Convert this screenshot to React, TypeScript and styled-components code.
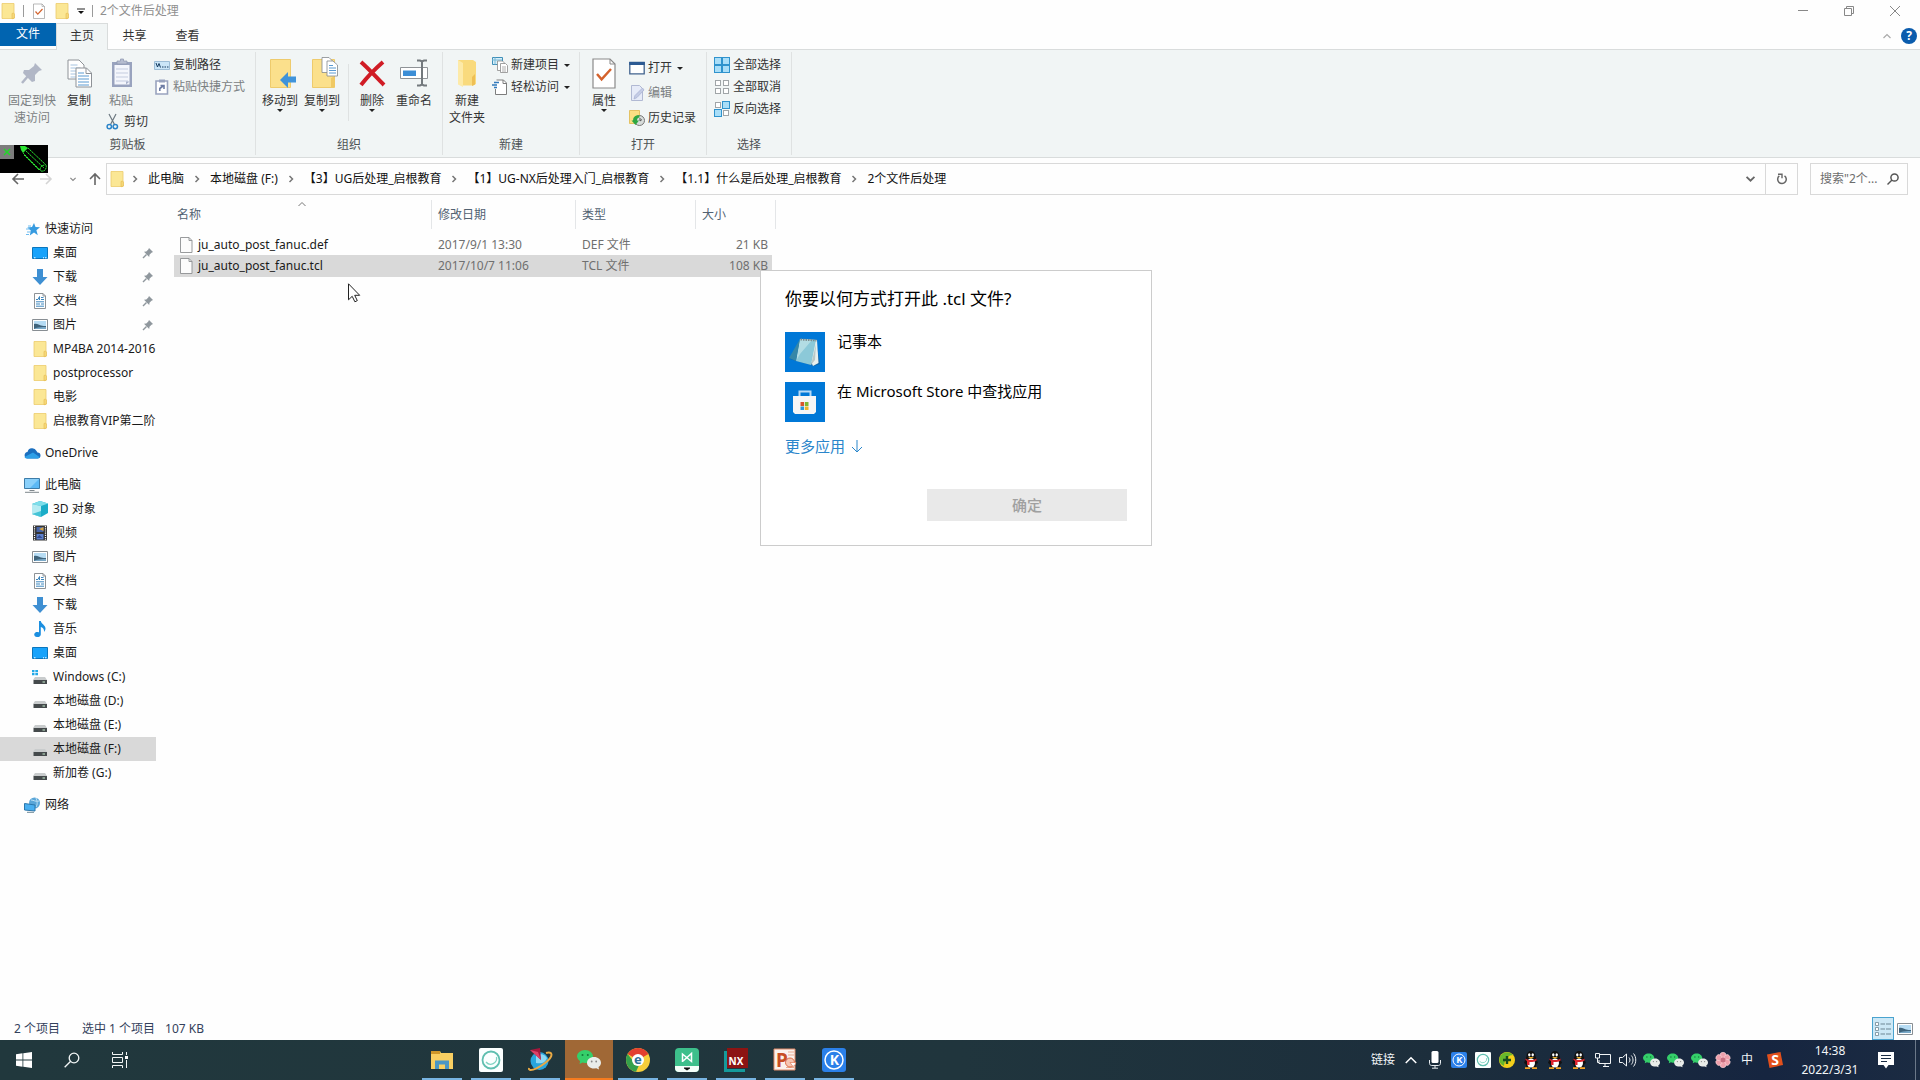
import React from "react";
import styled, { createGlobalStyle, css } from "styled-components";

const GlobalStyle = createGlobalStyle`
  * { box-sizing: border-box; }
  html, body { margin: 0; padding: 0; }
  body {
    font-family: "Noto Sans", "Noto Sans CJK SC", sans-serif;
    font-size: 12px;
    line-height: 16px;
    color: #1a1a1a;
    background: #ffffff;
    overflow: hidden;
  }
  button, input { font: inherit; color: inherit; }
  button { border: 0; padding: 0; margin: 0; background: none; cursor: default; }
  svg { display: block; flex: none; overflow: visible; }
  ul { list-style: none; margin: 0; padding: 0; }
`;

/* ---------- Icons ---------- */

type IconProps = { s?: number };

const SvgText = styled.text`
  font-family: "Noto Sans", sans-serif;
  font-weight: 700;
`;

const Folder = ({ s = 16 }: IconProps) => (
  <svg width={s} height={s} viewBox="0 0 16 16">
    <path d="M2 .5h12v15H2z" fill="#fbe795" stroke="#eccb6c" strokeWidth=".8" />
    <path d="M12 10.500l1.500-.5 1 1v4l-2.500.8z" fill="#f5d877" stroke="#e6bb50" strokeWidth=".6" />
  </svg>
);
const BigFolder = () => (
  <svg width="32" height="32" viewBox="0 0 32 32">
    <path d="M7 3h15l3 2v22l-3 1.500H11z" fill="#f9da7d" />
    <path d="M7 3l5 3v24l-5-2.500z" fill="#fdeaa8" />
    <path d="M24 17l-3 3v9l3-1.500z" fill="#eebf55" />
  </svg>
);
const PageCheck = ({ s = 16 }: IconProps) => (
  <svg width={s} height={s} viewBox="0 0 16 16">
    <path d="M2.500 1h8.500l2.500 2.500v12h-11z" fill="#fff" stroke="#8a8a8a" strokeWidth=".6" />
    <path d="M11 1v2.500h2.500" fill="none" stroke="#8a8a8a" strokeWidth=".5" />
    <path d="M4.500 8.500l2.300 2.700L11.500 6" fill="none" stroke="#d4622c" strokeWidth="1.200" />
  </svg>
);
const Caret = () => (
  <svg width="6" height="3" viewBox="0 0 6 3"><path d="M0 0h6L3 3z" fill="#222" /></svg>
);
const QuickCaret = () => (
  <svg width="8" height="7" viewBox="0 0 8 7"><path d="M0 1h8" stroke="#222" /><path d="M1 3h6L4 6z" fill="#111" /></svg>
);
const Chevron = ({ dir, color = "#777", s = 8, w = 1.5 }: { dir: "up" | "down" | "right"; color?: string; s?: number; w?: number }) => (
  <svg width={s} height={s} viewBox="0 0 8 8">
    <path
      d={dir === "right" ? "M2.500 1l3 3-3 3" : dir === "up" ? "M.5 6L4 2.500 7.500 6" : "M.5 2.500L4 6l3.500-3.500"}
      fill="none" stroke={color} strokeWidth={w}
    />
  </svg>
);
const Pin = () => (
  <svg width="32" height="32" viewBox="0 0 32 32">
    <path d="M19 6l7 7-3 1-4 4 0 6-3 1-9-9 1-3h5l5-4z" fill="#b1b7c6" />
    <path d="M12 19l-6 7" stroke="#b1b7c6" strokeWidth="2.500" />
  </svg>
);
const SmallPin = () => (
  <svg width="12" height="12" viewBox="0 0 12 12">
    <path d="M7 1l4 4-1.500.7-2 2L7.200 10 2 4.800l2.300-.3 2-2z" fill="#8f979d" />
    <path d="M4.500 7.500L1 11" stroke="#8f979d" strokeWidth="1.400" />
  </svg>
);
const CopyPages = () => (
  <svg width="32" height="32" viewBox="0 0 32 32">
    <path d="M5 3h11l5 5v14H5z" fill="#fff" stroke="#8e9297" />
    <path d="M7.500 8h7M7.500 11h10M7.500 14h6M7.500 17h6M7.500 20h6" stroke="#a6c3e0" />
    <path d="M13 11h10.500l5 5v14H13z" fill="#fff" stroke="#8e9297" />
    <path d="M23 11v5.500h5" fill="none" stroke="#8e9297" />
    <path d="M15 16h6M15 19h11M15 22h11M15 25h11M15 28h11" stroke="#5b9bd2" />
  </svg>
);
const Clipboard = () => (
  <svg width="32" height="32" viewBox="0 0 32 32">
    <path d="M7 5h20v25H7z" fill="#99a3be" />
    <path d="M9.500 8h15v19.500h-15z" fill="#f4f6fc" />
    <path d="M12 6V4h3.500V2h3v2H22v3H12z" fill="#b6bdd0" stroke="#8e97b0" strokeWidth=".7" />
    <path d="M11 12h12M11 16h12M11 20h12M11 24h12" stroke="#c4ccdf" />
    <path d="M21 27.500v-3h3.500z" fill="#aab3cb" />
  </svg>
);
const Scissors = () => (
  <svg width="16" height="16" viewBox="0 0 16 16">
    <path d="M4 0l5.500 10.500M11 0L5.500 10.500" stroke="#6d7880" strokeWidth="1.200" fill="none" />
    <circle cx="4.300" cy="12.600" r="2.200" fill="none" stroke="#2a83c8" strokeWidth="1.500" />
    <circle cx="10.300" cy="12.600" r="2.200" fill="none" stroke="#2a83c8" strokeWidth="1.500" />
  </svg>
);
const PathIcon = () => (
  <svg width="16" height="16" viewBox="0 0 16 16">
    <path d="M.5 4.500h15v8H.5z" fill="#cbe6f8" stroke="#9dbdd6" />
    <path d="M2 6l1.500 4L5 6.500 6.500 10.500" fill="none" stroke="#12395e" />
    <path d="M8 10h1.500M10.500 10H12M13 10h1.500" stroke="#12395e" />
  </svg>
);
const PasteShortcut = () => (
  <svg width="16" height="16" viewBox="0 0 16 16">
    <path d="M2 2h11.500v13H2z" fill="#fff" stroke="#99a3be" strokeWidth="1.600" />
    <path d="M5 .5h6v3H5z" fill="#99a3be" />
    <path d="M5.800 12V9.500L9 7M6.500 6.500H10V10" fill="none" stroke="#6d7ca4" strokeWidth="1.600" />
  </svg>
);
const MoveTo = () => (
  <svg width="32" height="32" viewBox="0 0 32 32">
    <path d="M6.500 2.500h20v28h-20z" fill="#fbe08c" stroke="#eecb6d" />
    <path d="M16 23l8-8v4.500h8v6h-8v5.500z" fill="#3f93da" />
  </svg>
);
const CopyTo = () => (
  <svg width="32" height="32" viewBox="0 0 32 32">
    <path d="M6.500 2.500h22v28h-22z" fill="#fbe08c" stroke="#eecb6d" />
    <path d="M25 21l4-2v11h-4z" fill="#f0c964" />
    <path d="M16 .5h7l4 4v11H16z" fill="#fff" stroke="#84898e" strokeWidth=".8" />
    <path d="M21 4h6l4.500 4v11H21z" fill="#fff" stroke="#84898e" strokeWidth=".8" />
    <path d="M23 8.500h4M23 11h7M23 13.500h7M23 16h7" stroke="#5b9bd2" />
  </svg>
);
const DeleteX = () => (
  <svg width="32" height="32" viewBox="0 0 32 32">
    <path d="M5 5c8 7 15 15 23 23M27 5C19 12 12 19 5 28" stroke="#d01c25" strokeWidth="4" fill="none" />
  </svg>
);
const Rename = () => (
  <svg width="32" height="32" viewBox="0 0 32 32">
    <path d="M2.500 10.500h27v11h-27z" fill="#fff" stroke="#8f9397" />
    <path d="M5 13.500h13v5.500H5z" fill="#3c8ed6" />
    <path d="M19 3.500h3l2 1 2-1h3M24 4v24M19 28.500h3l2-1 2 1h3" fill="none" stroke="#73797d" strokeWidth="2" />
  </svg>
);
const NewItem = () => (
  <svg width="16" height="16" viewBox="0 0 16 16">
    <path d="M.5.500h10v7H.5z" fill="#d7effa" stroke="#3f8fb8" />
    <path d="M3 .5v7M0 3h10" stroke="#78b9d6" />
    <path d="M5.500 4h5l2 2v7.500h-7z" fill="#fff" stroke="#8a8a8a" strokeWidth=".8" />
    <path d="M8.500 6.500h5l2 2v7h-7z" fill="#fff" stroke="#8a8a8a" strokeWidth=".8" />
    <path d="M10 10h4M10 12h4M10 14h4" stroke="#999" strokeWidth=".8" />
  </svg>
);
const EasyAccess = () => (
  <svg width="16" height="16" viewBox="0 0 16 16">
    <path d="M4.500 1h7l3 3v11.500h-11V10" fill="#fff" stroke="#7d7d7d" />
    <path d="M11 1v3.500h3.500" fill="none" stroke="#7d7d7d" />
    <path d="M2 3.500h5M0 6h5M2 8.500h3" stroke="#3279bb" strokeWidth="1.300" />
  </svg>
);
const OpenIcon = () => (
  <svg width="16" height="16" viewBox="0 0 16 16">
    <path d="M.8 2.500h14.400v11.300H.8z" fill="#fff" stroke="#41638e" strokeWidth="1.300" />
    <path d="M.2 2h15.600v3H.2z" fill="#2c5a93" />
  </svg>
);
const EditIcon = () => (
  <svg width="16" height="16" viewBox="0 0 16 16">
    <path d="M2.500.5h8l3 3v12h-11z" fill="#e6ebf8" stroke="#b1b9d3" />
    <path d="M5 14l1-3.500L13.500 3l1.500 2-7 7.500z" fill="#c4cce5" stroke="#a9b3d3" strokeWidth=".8" />
  </svg>
);
const History = () => (
  <svg width="16" height="16" viewBox="0 0 16 16">
    <path d="M.5.500h10v13H.5z" fill="#fbdf83" stroke="#e0b74d" strokeWidth=".8" />
    <circle cx="10.500" cy="10.500" r="5" fill="#d7dcda" stroke="#777" />
    <path d="M10.500 5.500a5 5 0 0 0-6.500 5H2.500l4 4.500 3.500-4.500H8c0-2 1-3 2.500-3z" fill="#2fa742" />
    <path d="M11 8v3l2-1.500" stroke="#555" fill="none" />
  </svg>
);
const Tiles = ({ on }: { on: boolean[] }) => (
  <svg width="16" height="16" viewBox="0 0 16 16">
    {on.map((f, i) => {
      const x = (i % 2) * 8;
      const y = Math.floor(i / 2) * 8;
      return f
        ? <rect key={i} x={x + 0.5} y={y + 0.5} width="7" height="7" fill="#a9def8" stroke="#2f93cd" />
        : <rect key={i} x={x + 1.5} y={y + 1.5} width="5" height="5" fill="#fff" stroke="#a0a5a8" />;
    })}
  </svg>
);
const ArrowIcon = ({ d, color }: { d: string; color: string }) => (
  <svg width="12" height="12" viewBox="0 0 12 12"><path d={d} fill="none" stroke={color} strokeWidth="1.600" /></svg>
);
const Refresh = () => (
  <svg width="12" height="12" viewBox="0 0 12 12">
    <path d="M8.500 2.800A4.300 4.300 0 1 1 3.300 2.900" fill="none" stroke="#666" strokeWidth="1.500" />
    <path d="M2 1.200h4v4" fill="none" stroke="#666" strokeWidth="1.400" />
  </svg>
);
const Magnifier = ({ color, w = 1.5, s = 12 }: { color: string; w?: number; s?: number }) => (
  <svg width={s} height={s} viewBox="0 0 12 12">
    <circle cx="7.500" cy="4.500" r="3.600" fill="none" stroke={color} strokeWidth={w} />
    <path d="M5 7L.5 11.500" stroke={color} strokeWidth={w} />
  </svg>
);
const FilePage = () => (
  <svg width="16" height="16" viewBox="0 0 16 16">
    <path d="M2.500.5h8.500l3 3v12H2.500z" fill="#fcfcfc" stroke="#8d9092" strokeWidth=".9" />
    <path d="M11 .5v3h3" fill="none" stroke="#8d9092" strokeWidth=".9" />
  </svg>
);
const Star = () => (
  <svg width="16" height="16" viewBox="0 0 16 16">
    <path d="M10 2l1.500 4 4.500.2-3.600 3 1.400 5L10 11.500l-4.200 3 1-5L3.300 6.500l4.700-.5z" fill="#369be0" />
    <path d="M4 5h3M2 8h4M3 11h4M2 13.500h3" stroke="#6fbcf0" strokeWidth="1" />
  </svg>
);
const Desktop = () => (
  <svg width="16" height="16" viewBox="0 0 16 16">
    <path d="M.5 2.500h15v11H.5z" fill="#18a3fb" stroke="#0b76bd" />
    <path d="M2 12.800h1.500M11 12.800h1M13 12.800h1.500" stroke="#fff" />
  </svg>
);
const Download = () => (
  <svg width="16" height="16" viewBox="0 0 16 16">
    <path d="M5 0h6v8h4.500L8 16 .5 8H5z" fill="#3e8fd2" />
  </svg>
);
const DocIcon = () => (
  <svg width="16" height="16" viewBox="0 0 16 16">
    <path d="M2.500.5h8.500l2.500 2.500v12.500h-11z" fill="#fff" stroke="#80868a" strokeWidth=".9" />
    <path d="M11 .5V3h2.500" fill="none" stroke="#80868a" strokeWidth=".8" />
    <path d="M4 6.500h2L7.500 3.500V7M9 4.500h2.500M9 6.500h3M4 8.800h8M4 11h4M4 13.200h8M9 11h3" stroke="#3d87be" fill="none" />
  </svg>
);
const PictureIcon = () => (
  <svg width="16" height="16" viewBox="0 0 16 16">
    <path d="M.5 2.500h15v11H.5z" fill="#fff" stroke="#888e93" />
    <path d="M2 4h12v8H2z" fill="#b6dcf4" />
    <path d="M2 7c3-1 5 1 7 1.500 2 .5 3 .5 5 .5v3H2z" fill="#3f647c" />
    <path d="M4 11c3-1 6-1 10-1v2H2z" fill="#7aa9c8" />
  </svg>
);
const OneDrive = () => (
  <svg width="16" height="16" viewBox="0 0 16 16">
    <path d="M3.500 7a4.800 4.800 0 0 1 9-1l1 1.500a3 3 0 0 1 0 6H3.200A3.300 3.300 0 0 1 3.500 7z" fill="#1b6fbf" />
    <path d="M.5 12L9 7.500l6.500 4.500c-.5 1-1.500 1.500-2.500 1.500H3.500c-1.500 0-2.500-.5-3-1.500z" fill="#2ea0e8" />
  </svg>
);
const Pc = () => (
  <svg width="16" height="16" viewBox="0 0 16 16">
    <path d="M.5 1.500h15v10H.5z" fill="#5cb9f5" stroke="#3d7ca8" />
    <path d="M1 2h14L6 11H1z" fill="#8ad0fa" />
    <path d="M5.500 13.500h5M1 15.300h14" stroke="#7f878c" />
  </svg>
);
const Cube = () => (
  <svg width="16" height="16" viewBox="0 0 16 16">
    <path d="M0 3l8-3 8 2.500V12l-7 4-9-3z" fill="#1badc8" />
    <path d="M0 3l8-3 8 2.500L9 5z" fill="#7ddeea" />
    <path d="M0 3l9 2v11l-9-3z" fill="#b5ebf2" />
    <path d="M9 10l-9 3 9 3z" fill="#44c3d6" />
  </svg>
);
const Video = () => (
  <svg width="16" height="16" viewBox="0 0 16 16">
    <path d="M1 .5h14v15H1z" fill="#333" />
    <path d="M2.500 1v14M13.500 1v14" stroke="#fff" strokeWidth="1.200" strokeDasharray="1.200 1" />
    <path d="M4.500 2h7v5h-7z" fill="#4664a8" /><path d="M7 4l4.500-2v4z" fill="#d4a443" />
    <path d="M4.500 9h7v5.500h-7z" fill="#5d80cc" /><path d="M4.500 13l3-3 3 3z" fill="#344d91" />
  </svg>
);
const Music = () => (
  <svg width="16" height="16" viewBox="0 0 16 16">
    <path d="M7 0h1.800c.4 3 4.700 4 4.700 7.500 0 1.500-.8 2.500-1.500 3.500.5-3-1.500-4.500-3.200-5v7.500a3.300 2.600 0 1 1-1.800-2.300z" fill="#1b8fe0" />
  </svg>
);
const Drive = ({ win }: { win?: boolean }) => (
  <svg width="16" height="16" viewBox="0 0 16 16">
    {win && <path d="M0 1h2.500v2.300H0zM3.300 1H6v2.300H3.300zM0 4h2.500v2.300H0zM3.300 4H6v2.300H3.300z" fill="#22a9e8" />}
    <path d="M3 8h10l2 3H1z" fill="#c9cccd" />
    <path d="M1.500 11h13.500v4H1.500z" fill="#454a4c" />
    <path d="M10.500 13h2.500" stroke="#c9f0d0" />
  </svg>
);
const Network = () => (
  <svg width="16" height="16" viewBox="0 0 16 16">
    <circle cx="10.500" cy="6" r="5.500" fill="#5aa6d8" />
    <path d="M7 3c3 0 4 2 8 1M12 1c1 3 2 6 0 9" stroke="#c0e2f5" fill="none" />
    <path d="M.5 6.500l10.500 1.500v6l-10.500-1z" fill="#49aff0" stroke="#2c77ac" />
    <path d="M3 15.300h7" stroke="#6c8797" />
  </svg>
);
const Notepad = () => (
  <svg width="40" height="40" viewBox="0 0 40 40">
    <path d="M16 8l15 1 4 23-6 2-24-7z" fill="#1b4d72" opacity=".5" />
    <path d="M15 7l17 1 1.500 23-5.500 3z" fill="#e7f0ee" />
    <path d="M15 7l16 1-5 25-15-4z" fill="#8cc9d8" />
    <path d="M15 7l12 1-12 14-4 7z" fill="#b3dde4" />
    <path d="M15 7L4 26l7 3z" fill="#3587a8" />
    <path d="M15.500 7.500l16 1" stroke="#7e8b8c" strokeWidth="2" strokeDasharray="1.500 1" />
    <path d="M31 12l-5 21 4-5z" fill="#b7c9c8" />
  </svg>
);
const Store = () => (
  <svg width="40" height="40" viewBox="0 0 40 40">
    <path d="M14.500 15V9.500h11V15" fill="none" stroke="#b7daf6" strokeWidth="2" />
    <path d="M8 14h23v16l-2 2H10l-2-2z" fill="#f6f6f6" />
    <path d="M15.500 20h3.500v4h-3.500z" fill="#d8542e" /><path d="M19.800 20h3.700v4h-3.700z" fill="#7eb833" />
    <path d="M15.500 24.500h3.500v3.500h-3.500z" fill="#2b96dc" /><path d="M19.800 24.500h3.700v3.500h-3.700z" fill="#edb52c" />
  </svg>
);
const WinLogo = () => (
  <svg width="16" height="16" viewBox="0 0 16 16">
    <path d="M0 2.300l6.500-1v6.200H0zM7.300 1.200L16 0v7.500H7.300zM0 8.400h6.500v6.300L0 13.800zM7.300 8.400H16V16l-8.700-1.200z" fill="#fff" />
  </svg>
);
const TaskView = () => (
  <svg width="16" height="16" viewBox="0 0 16 16">
    <path d="M.5 0v2.500h10V0M.5 16v-2.500h10V16M.5 5.500h10v5H.5zM14.500 0v3M14.500 8v8" fill="none" stroke="#f2f6f6" />
    <path d="M13 4h3v3h-3z" fill="#fff" />
  </svg>
);
const ExplorerApp = () => (
  <svg width="24" height="24" viewBox="0 0 24 24">
    <path d="M1 3h9l1 2h12v16H1z" fill="#f9cf62" /><path d="M1 3h9v3H1z" fill="#cf972a" />
    <path d="M5 12.500h14V21h-4v-4.500H9V21H5z" fill="#4b97c5" />
  </svg>
);
const RingApp = ({ s = 24 }: IconProps) => (
  <svg width={s} height={s} viewBox="0 0 24 24">
    <rect width="24" height="24" rx="2" fill="#fbffff" />
    <circle cx="12" cy="12" r="8.500" fill="none" stroke="#5fbfb0" strokeWidth="1.800" />
    <path d="M7 14a6 6 0 0 0 10.500-5" fill="none" stroke="#7fd3c2" strokeWidth="1.300" />
  </svg>
);
const UgApp = () => (
  <svg width="24" height="24" viewBox="0 0 24 24">
    <circle cx="11.500" cy="13" r="9" fill="#28a5dd" /><path d="M8 8a7 7 0 0 1 11 2c-2 5-6 6-11 5z" fill="#8ed8f4" />
    <path d="M2 2l10-2 1 12z" fill="#a6173c" /><path d="M2 2l8 2 3 8z" fill="#dc4168" />
    <path d="M18 5c7-2 8 3-1 10C8 22 0 24 1 20" fill="none" stroke="#e8a945" strokeWidth="2" />
  </svg>
);
const WeChat = ({ s = 24 }: IconProps) => (
  <svg width={s} height={s} viewBox="0 0 24 24">
    <path d="M8 2c4.500 0 8 3 8 6.700S12.500 15 8 15l-2.500-.5L2.500 16l.6-2.800A6.500 6.500 0 0 1 0 8.700C0 5 3.500 2 8 2z" fill="#35cf6a" />
    <path d="M17 9c4 0 7 2.600 7 5.800 0 1.800-1 3.300-2.500 4.300l.5 2.400-2.600-1.200-2.400.3c-4 0-7-2.600-7-5.800S13 9 17 9z" fill="#e9ece9" />
    <circle cx="5.500" cy="7" r="1" fill="#14793a" /><circle cx="10.800" cy="7" r="1" fill="#14793a" />
    <circle cx="14.700" cy="13.500" r=".9" fill="#888" /><circle cx="19.200" cy="13.500" r=".9" fill="#888" />
  </svg>
);
const ChromeApp = () => (
  <svg width="24" height="24" viewBox="0 0 24 24">
    <circle cx="12" cy="12" r="12" fill="#f6cf3c" />
    <path d="M12 12L1.600 6A12 12 0 0 1 22.400 6z" fill="#e3402f" />
    <path d="M1.600 6A12 12 0 0 0 10 23.800L14 15 8 14z" fill="#35a04b" />
    <circle cx="12" cy="12" r="6" fill="#fff" />
    <SvgText x="12" y="16" fontSize="13" textAnchor="middle" fill="#2c6f98">e</SvgText>
  </svg>
);
const MindApp = () => (
  <svg width="24" height="24" viewBox="0 0 24 24">
    <rect width="24" height="24" rx="4" fill="#3dbf8b" />
    <path d="M0 18h24v2a4 4 0 0 1-4 4H4a4 4 0 0 1-4-4z" fill="#f4fffa" />
    <path d="M7.500 14V6l9 7.500V5.500l-9 8" fill="none" stroke="#fff" strokeWidth="1.500" />
    <path d="M9 19.500h6v1l-3 2-3-2z" fill="#111" />
  </svg>
);
const NxApp = () => (
  <svg width="24" height="24" viewBox="0 0 24 24">
    <path d="M0 3h3v18h18v3H0z" fill="#159a9b" /><path d="M3 0h21v20H3z" fill="#8c1413" />
    <SvgText x="12" y="17" fontSize="10" textAnchor="middle" fill="#fff">NX</SvgText>
  </svg>
);
const PptApp = () => (
  <svg width="24" height="24" viewBox="0 0 24 24">
    <path d="M1 1h21v21H1z" fill="#fbf1ec" stroke="#e08a68" />
    <path d="M15 4h6M15 7h6M13 19.500h8" stroke="#e9ab92" />
    <circle cx="17" cy="14.500" r="4.500" fill="#f6c5b2" stroke="#df6b43" /><path d="M17 14.500h6a5 5 0 0 1-3 4z" fill="#fff" stroke="#df6b43" strokeWidth=".6" />
    <SvgText x="3" y="19" fontSize="19" fill="#c84d24">P</SvgText>
  </svg>
);
const KApp = ({ s = 24 }: IconProps) => (
  <svg width={s} height={s} viewBox="0 0 24 24">
    <rect width="24" height="24" rx="3" fill="#2b80e9" />
    <circle cx="12" cy="12" r="9" fill="none" stroke="#fff" strokeWidth="1.500" />
    <SvgText x="12.500" y="17" fontSize="14" textAnchor="middle" fill="#fff">K</SvgText>
  </svg>
);
const Mic = () => (
  <svg width="16" height="18" viewBox="0 0 16 18">
    <rect x="4.500" y="0" width="7" height="12" rx="1.500" fill="#fff" />
    <path d="M2.500 9v3.500c0 1 1 2 2 2h7c1 0 2-1 2-2V9M8 15v2M5 17.200h6" fill="none" stroke="#e6ecf0" />
  </svg>
);
const Shield360 = () => (
  <svg width="16" height="16" viewBox="0 0 16 16">
    <circle cx="8" cy="8" r="8" fill="#f4cf1b" />
    <path d="M2 3a8 8 0 0 1 12 0C10 3 6 6 5 14 0 12-1 7 2 3z" fill="#67b82c" />
    <path d="M8 4v8M4 8h8" stroke="#174d1e" strokeWidth="2.400" />
  </svg>
);
const QQ = () => (
  <svg width="16" height="18" viewBox="0 0 16 18">
    <path d="M8 0c3 0 4.500 2.500 4.500 5.500L15 12l-1.500 1-1 3h-9l-1-3L1 12l2.500-6.500C3.500 2.500 5 0 8 0z" fill="#111" />
    <ellipse cx="8" cy="12" rx="4" ry="4.500" fill="#fff" />
    <ellipse cx="6.300" cy="3.800" rx="1.200" ry="1.600" fill="#fff" /><ellipse cx="9.700" cy="3.800" rx="1.200" ry="1.600" fill="#fff" />
    <path d="M5 6h6l-3 1.700z" fill="#f5b324" />
    <path d="M2.500 7.500c3 2 8 2 11 0v2.300c-2 1-5 1.500-7 1.200V14H4v-4l-1.500-1z" fill="#dc2531" />
    <path d="M2 16.300h5V18H2zM9 16.300h5V18H9z" fill="#f3a223" />
  </svg>
);
const NetTray = () => (
  <svg width="16" height="16" viewBox="0 0 16 16">
    <path d="M5 2.500h10.500v9H4V8M8 14.500h6M10 12v2.500M.5 1.500h4V6h-4zM2.500 6v4.500H4" fill="none" stroke="#f1f4f6" />
  </svg>
);
const Sound = () => (
  <svg width="17" height="16" viewBox="0 0 17 16">
    <path d="M.5 5.500h3l4-3.500v12l-4-3.500h-3zM10 5.500c1.300 1.500 1.300 3.500 0 5M12.300 3.500c2.300 2.500 2.300 6.500 0 9M14.500 1.500c3 3.500 3 9.500 0 13" fill="none" stroke="#f1f4f6" />
  </svg>
);
const Flower = () => (
  <svg width="16" height="16" viewBox="0 0 16 16">
    {[0, 60, 120, 180, 240, 300].map((a) => (
      <circle key={a} cx="8" cy="3.300" r="3" fill="#efa0ac" stroke="#fbd9dd" strokeWidth=".6" transform={`rotate(${a} 8 8)`} />
    ))}
    <circle cx="8" cy="8" r="2.500" fill="#c96f80" />
  </svg>
);
const Sogou = () => (
  <svg width="16" height="16" viewBox="0 0 16 16">
    <path d="M0 2.500L13.500 0 16 13 2.500 16z" fill="#e2501c" />
    <SvgText x="8" y="13" fontSize="14" textAnchor="middle" fill="#fff">S</SvgText>
  </svg>
);
const Notice = () => (
  <svg width="16" height="18" viewBox="0 0 16 18">
    <path d="M0 1h16v13h-5.500L8 17.500 5.500 14H0z" fill="#fff" />
    <path d="M3 4.500h10M3 7.500h10M3 10.500h6" stroke="#1b2d45" />
  </svg>
);
const DetailsView = () => (
  <svg width="16" height="14" viewBox="0 0 16 14">
    <path d="M.5.500h3v3h-3zM.5 5.500h3v3h-3zM.5 10.500h3v3h-3z" fill="#fff" stroke="#6d8794" strokeWidth=".8" />
    <path d="M5.500 2H10M11 2h5M5.500 7H10M11 7h5M5.500 12H10M11 12h5" stroke="#6d8794" />
  </svg>
);

/* ---------- Window frame ---------- */

const Page = styled.div`
  position: relative;
  display: flex;
  flex-direction: column;
  height: 100vh;
  background: #fefefe;
`;
const TitleBar = styled.header`
  display: flex;
  align-items: center;
  height: 22px;
  padding-right: 2px;
  flex: none;
`;
const QuickTools = styled.div`
  display: flex;
  align-items: center;
  gap: 7px;
`;
const Rule = styled.span`
  width: 1px;
  height: 12px;
  background: #9a9a9a;
`;
const WindowTitle = styled.h1`
  margin: 0 auto 0 7px;
  font-size: 12px;
  font-weight: 400;
  color: #8f8f8f;
`;
const CaptionButton = styled.button`
  display: grid;
  place-items: center;
  width: 46px;
  height: 20px;
`;
const TabBar = styled.nav`
  display: flex;
  align-items: stretch;
  height: 28px;
  padding-top: 1px;
  flex: none;
  border-bottom: 1px solid #d9dcdc;
`;
const Tab = styled.button<{ $kind?: "file" | "active" }>`
  width: 53px;
  padding-bottom: 1px;
  color: #333;
  ${(p) => p.$kind === "file" && css`
    width: 56px;
    height: 23px;
    background: #0164b0;
    color: #fff;
  `}
  ${(p) => p.$kind === "active" && css`
    background: #f1f5f5;
    border: solid #d9dcdc;
    border-width: 1px 1px 0;
    margin-bottom: -1px;
    padding-bottom: 3px;
    width: 52px;
  `}
`;
const TabTools = styled.div`
  display: flex;
  align-items: center;
  gap: 10px;
  margin-left: auto;
  padding-right: 3px;
`;
const Help = styled.button`
  width: 16px;
  height: 16px;
  border-radius: 50%;
  background: #0b5cad;
  color: #fff;
  font-weight: 700;
  line-height: 16px;
`;

/* ---------- Ribbon ---------- */

const Ribbon = styled.section`
  display: flex;
  flex: none;
  height: 108px;
  background: #f1f5f5;
  border-bottom: 1px solid #d9dcdc;
`;
const Group = styled.div<{ $w: number }>`
  display: flex;
  flex-direction: column;
  width: ${(p) => p.$w}px;
  margin: 2px 0;
  border-right: 1px solid #dfe2e2;
`;
const GroupBody = styled.div<{ $pad?: number }>`
  display: flex;
  flex: 1;
  padding-left: ${(p) => p.$pad ?? 0}px;
`;
const GroupName = styled.div`
  height: 18px;
  text-align: center;
  color: #4d5254;
`;
const BigButton = styled.button<{ $w?: number; $dim?: boolean }>`
  display: flex;
  flex-direction: column;
  align-items: center;
  width: ${(p) => p.$w ?? 42}px;
  padding-top: 5px;
  align-self: flex-start;
  line-height: 17px;
  white-space: pre-line;
  color: ${(p) => (p.$dim ? "#7b8082" : "#333")};
  svg + span { margin-top: 3px; }
`;
const Stack = styled.div<{ $tall?: boolean; $pad?: number }>`
  display: flex;
  flex-direction: column;
  padding-top: ${(p) => (p.$tall ? 6 : 3)}px;
  padding-left: ${(p) => p.$pad ?? 0}px;
  gap: ${(p) => (p.$tall ? 5 : 2)}px;
`;
const PasteStack = styled.div`
  display: flex;
  flex-direction: column;
  width: 54px;
`;
const SmallButton = styled.button<{ $dim?: boolean }>`
  display: flex;
  align-items: center;
  gap: 3px;
  height: 20px;
  white-space: nowrap;
  color: ${(p) => (p.$dim ? "#7b8082" : "#333")};
  span + svg { margin-left: 2px; }
`;
const Divider = styled.span`
  width: 1px;
  margin: 12px 2px 16px 5px;
  background: #dfe2e2;
`;

/* ---------- Address row ---------- */

const AddressRow = styled.div`
  display: flex;
  align-items: center;
  flex: none;
  height: 41px;
  padding: 0 12px;
`;
const NavButtons = styled.div`
  display: flex;
  align-items: center;
  width: 94px;
  gap: 16px;
  button + button + button { margin-left: 2px; }
  button + button + button + button { margin-left: -3px; }
`;
const AddressBox = styled.div`
  display: flex;
  align-items: center;
  flex: 1;
  height: 32px;
  border: 1px solid #d9d9d9;
  padding-left: 2px;
  color: #111;
`;
const Crumbs = styled.ol`
  display: flex;
  align-items: center;
  flex: 1;
  margin: 0;
  padding: 0 0 0 6px;
  list-style: none;
  white-space: nowrap;
`;
const Crumb = styled.li`
  display: flex;
  align-items: center;
  gap: 9px;
  padding-right: 9px;
  a { color: inherit; text-decoration: none; }
`;
const BoxButton = styled.button<{ $line?: boolean }>`
  display: grid;
  place-items: center;
  width: ${(p) => (p.$line ? 32 : 30)}px;
  height: 30px;
  border-left: ${(p) => (p.$line ? "1px solid #d9d9d9" : "0")};
`;
const SearchBox = styled.label`
  display: flex;
  align-items: center;
  width: 98px;
  height: 32px;
  margin-left: 12px;
  padding: 0 8px 0 9px;
  border: 1px solid #d9d9d9;
  input {
    flex: 1;
    min-width: 0;
    border: 0;
    padding: 0;
    outline: 0;
    background: none;
  }
  input::placeholder { color: #6d6d6d; opacity: 1; }
`;

/* ---------- Body ---------- */

const Body = styled.div`
  display: flex;
  flex: 1;
  min-height: 0;
`;
const Sidebar = styled.nav`
  width: 156px;
  padding-top: 18px;
  overflow: hidden;
  ul + ul { margin-top: 8px; }
`;
const TreeItem = styled.li<{ $level: 0 | 1; $on?: boolean }>`
  display: flex;
  align-items: center;
  height: 24px;
  padding-left: ${(p) => (p.$level ? 32 : 24)}px;
  gap: 5px;
  white-space: nowrap;
  background: ${(p) => (p.$on ? "#d9d9d9" : "transparent")};
  a { flex: 1; min-width: 0; overflow: hidden; color: inherit; text-decoration: none; }
  a + svg { margin-right: 2px; }
`;
const Files = styled.main`
  flex: 1;
  padding: 1px 0 0 18px;
`;
const FileTable = styled.table`
  width: 602px;
  table-layout: fixed;
  border-collapse: separate;
  border-spacing: 0;
  th {
    position: relative;
    height: 29px;
    padding: 0 0 0 6px;
    font-weight: 400;
    text-align: left;
    color: #526272;
    border-right: 1px solid #e4e6e8;
  }
  th:first-child { padding-left: 3px; }
  thead::after { content: ""; display: block; height: 5px; }
`;
const SortMark = styled.span`
  position: absolute;
  top: 0;
  left: 50%;
  margin-left: -5px;
`;
const FileRow = styled.tr<{ $on?: boolean }>`
  td {
    height: ${(p) => (p.$on ? 22 : 21)}px;
    padding: 0 0 0 6px;
    color: #6f6f6f;
    background: ${(p) => (p.$on ? "#d9d9d9" : "transparent")};
    background-clip: padding-box;
    white-space: nowrap;
  }
  td:first-child { padding-left: 4px; color: #1a1a1a; }
  td:last-child { text-align: right; padding-right: 4px; border-right: 4px solid transparent; }
`;
const FileName = styled.span`
  display: flex;
  align-items: center;
  gap: 4px;
`;
const StatusBar = styled.footer`
  display: flex;
  align-items: center;
  flex: none;
  height: 23px;
  padding-left: 14px;
  color: #33415c;
  gap: 22px;
`;
const ViewButtons = styled.div`
  display: flex;
  align-items: center;
  margin-left: auto;
  padding-right: 7px;
  gap: 3px;
`;
const ViewButton = styled.button<{ $on?: boolean }>`
  display: grid;
  place-items: center;
  width: ${(p) => (p.$on ? 22 : 16)}px;
  height: 23px;
  ${(p) => p.$on && css`background: #cce8f6; border: 1px solid #4aa3cf;`}
`;
const Pair = styled.span`
  display: flex;
  gap: 10px;
`;

/* ---------- Dialog ---------- */

const Dialog = styled.section`
  position: absolute;
  top: 270px;
  left: 760px;
  width: 392px;
  padding: 16px 24px 24px;
  background: #fff;
  border: 1px solid #ccc;
  color: #000;
  font-size: 15px;
  line-height: 18px;
`;
const DialogTitle = styled.h2`
  margin: 0 0 21px;
  font-size: 17px;
  line-height: 24px;
  font-weight: 400;
`;
const AppOption = styled.button`
  display: flex;
  align-items: flex-start;
  gap: 12px;
  width: 100%;
  margin-bottom: 10px;
  text-align: left;
`;
const AppTile = styled.span`
  width: 40px;
  height: 40px;
  background: #0078d7;
`;
const MoreLink = styled.a`
  display: flex;
  align-items: center;
  gap: 6px;
  margin-top: 15px;
  color: #2a86cb;
  text-decoration: none;
`;
const OkButton = styled.button`
  display: block;
  width: 200px;
  height: 32px;
  margin: 34px 0 0 auto;
  background: #e9e9e9;
  color: #a0a0a0;
  font-weight: 500;
`;

/* ---------- Floating items ---------- */

const PenWidget = styled.div`
  position: absolute;
  top: 145px;
  left: 0;
  width: 48px;
  height: 28px;
  background: #000;
`;
const Cursor = styled.div`
  position: absolute;
  top: 283px;
  left: 348px;
`;

/* ---------- Taskbar ---------- */

const Taskbar = styled.nav`
  display: flex;
  align-items: center;
  flex: none;
  height: 40px;
  color: #f2f5f7;
  background: linear-gradient(90deg, #21383d 0%, #20353d 50%, #1c2e3c 75%, #162540 92%, #1b2b42 100%);
`;
const SysButtons = styled.div`
  display: flex;
  width: 418px;
`;
const SysButton = styled.button`
  display: grid;
  place-items: center;
  width: 48px;
  height: 40px;
`;
const Apps = styled.div`
  display: flex;
  gap: 1px;
`;
const AppButton = styled.button<{ $on?: boolean }>`
  display: grid;
  place-items: center;
  width: 48px;
  height: 40px;
  background: ${(p) => (p.$on ? "linear-gradient(#f67b1f,#f67b1f) bottom / 100% 2px no-repeat, #a06836" : "linear-gradient(#78b4e2,#78b4e2) bottom / 40px 2px no-repeat")};
`;
const Tray = styled.div`
  display: flex;
  align-items: center;
  margin-left: auto;
`;
const TrayButton = styled.button<{ $w?: number }>`
  display: grid;
  place-items: center;
  width: ${(p) => p.$w ?? 24}px;
  height: 40px;
`;
const Clock = styled.time`
  width: 78px;
  text-align: center;
  line-height: 19px;
`;
const ShowDesktop = styled.button`
  width: 5px;
  height: 40px;
  border-left: 1px solid #6b7889;
`;

const crumbs = ["此电脑", "本地磁盘 (F:)", "【3】UG后处理_启根教育", "【1】UG-NX后处理入门_启根教育", "【1.1】什么是后处理_启根教育", "2个文件后处理"];

type Node = { icon: React.ReactNode; label: string; pin?: boolean; on?: boolean };
const tree: Node[][] = [
  [
    { icon: <Star />, label: "快速访问" },
    { icon: <Desktop />, label: "桌面", pin: true },
    { icon: <Download />, label: "下载", pin: true },
    { icon: <DocIcon />, label: "文档", pin: true },
    { icon: <PictureIcon />, label: "图片", pin: true },
    { icon: <Folder />, label: "MP4BA 2014-2016" },
    { icon: <Folder />, label: "postprocessor" },
    { icon: <Folder />, label: "电影" },
    { icon: <Folder />, label: "启根教育VIP第二阶" },
  ],
  [{ icon: <OneDrive />, label: "OneDrive" }],
  [
    { icon: <Pc />, label: "此电脑" },
    { icon: <Cube />, label: "3D 对象" },
    { icon: <Video />, label: "视频" },
    { icon: <PictureIcon />, label: "图片" },
    { icon: <DocIcon />, label: "文档" },
    { icon: <Download />, label: "下载" },
    { icon: <Music />, label: "音乐" },
    { icon: <Desktop />, label: "桌面" },
    { icon: <Drive win />, label: "Windows (C:)" },
    { icon: <Drive />, label: "本地磁盘 (D:)" },
    { icon: <Drive />, label: "本地磁盘 (E:)" },
    { icon: <Drive />, label: "本地磁盘 (F:)", on: true },
    { icon: <Drive />, label: "新加卷 (G:)" },
  ],
  [{ icon: <Network />, label: "网络" }],
];

const files = [
  { name: "ju_auto_post_fanuc.def", date: "2017/9/1 13:30", type: "DEF 文件", size: "21 KB" },
  { name: "ju_auto_post_fanuc.tcl", date: "2017/10/7 11:06", type: "TCL 文件", size: "108 KB", on: true },
];

const apps = [
  { name: "文件资源管理器", icon: <ExplorerApp /> },
  { name: "录屏", icon: <RingApp /> },
  { name: "UG", icon: <UgApp /> },
  { name: "微信", icon: <WeChat />, on: true },
  { name: "Chrome", icon: <ChromeApp /> },
  { name: "MindMaster", icon: <MindApp /> },
  { name: "NX", icon: <NxApp /> },
  { name: "PowerPoint", icon: <PptApp /> },
  { name: "K", icon: <KApp /> },
];

const tray = [
  { name: "麦克风", icon: <Mic /> },
  { name: "K", icon: <KApp s={16} /> },
  { name: "录屏", icon: <RingApp s={16} /> },
  { name: "360", icon: <Shield360 /> },
  { name: "QQ 1", icon: <QQ /> },
  { name: "QQ 2", icon: <QQ /> },
  { name: "QQ 3", icon: <QQ /> },
  { name: "网络", icon: <NetTray /> },
  { name: "音量", icon: <Sound /> },
  { name: "微信 1", icon: <WeChat s={17} /> },
  { name: "微信 2", icon: <WeChat s={17} /> },
  { name: "微信 3", icon: <WeChat s={17} /> },
  { name: "花", icon: <Flower /> },
];

export default function App() {
  return (
    <Page>
      <GlobalStyle />
      <TitleBar>
        <QuickTools>
          <Folder />
          <Rule />
          <button aria-label="属性"><PageCheck /></button>
          <button aria-label="新建文件夹"><Folder /></button>
          <button aria-label="自定义"><QuickCaret /></button>
          <Rule />
        </QuickTools>
        <WindowTitle>2个文件后处理</WindowTitle>
        <CaptionButton aria-label="最小化">
          <svg width="10" height="10" viewBox="0 0 10 10"><path d="M0 4.500h10" stroke="#888" /></svg>
        </CaptionButton>
        <CaptionButton aria-label="还原">
          <svg width="10" height="10" viewBox="0 0 10 10"><path d="M.5 2.500h7v7h-7zM2.500 2.500v-2h7v7h-2" fill="none" stroke="#888" /></svg>
        </CaptionButton>
        <CaptionButton aria-label="关闭">
          <svg width="10" height="10" viewBox="0 0 10 10"><path d="M0 0l10 10M10 0L0 10" stroke="#888" /></svg>
        </CaptionButton>
      </TitleBar>
      <TabBar>
        <Tab $kind="file">文件</Tab>
        <Tab $kind="active">主页</Tab>
        <Tab>共享</Tab>
        <Tab>查看</Tab>
        <TabTools>
          <button aria-label="折叠功能区"><Chevron dir="up" color="#aaa" s={8} w={1.2} /></button>
          <Help aria-label="帮助">?</Help>
        </TabTools>
      </TabBar>

      <Ribbon>
        <Group $w={256}>
          <GroupBody $pad={6}>
            <BigButton $w={52} $dim><Pin /><span>{"固定到快\n速访问"}</span></BigButton>
            <BigButton><CopyPages /><span>复制</span></BigButton>
            <PasteStack>
              <BigButton $dim><Clipboard /><span>粘贴</span></BigButton>
              <Stack $pad={5}><SmallButton><Scissors /><span>剪切</span></SmallButton></Stack>
            </PasteStack>
            <Stack>
              <SmallButton><PathIcon /><span>复制路径</span></SmallButton>
              <SmallButton $dim><PasteShortcut /><span>粘贴快捷方式</span></SmallButton>
            </Stack>
          </GroupBody>
          <GroupName>剪贴板</GroupName>
        </Group>
        <Group $w={187}>
          <GroupBody $pad={3}>
            <BigButton><MoveTo /><span>移动到</span><Caret /></BigButton>
            <BigButton><CopyTo /><span>复制到</span><Caret /></BigButton>
            <Divider />
            <BigButton><DeleteX /><span>删除</span><Caret /></BigButton>
            <BigButton><Rename /><span>重命名</span></BigButton>
          </GroupBody>
          <GroupName>组织</GroupName>
        </Group>
        <Group $w={137}>
          <GroupBody $pad={3}>
            <BigButton><BigFolder /><span>{"新建\n文件夹"}</span></BigButton>
            <Stack $pad={4}>
              <SmallButton><NewItem /><span>新建项目</span><Caret /></SmallButton>
              <SmallButton><EasyAccess /><span>轻松访问</span><Caret /></SmallButton>
            </Stack>
          </GroupBody>
          <GroupName>新建</GroupName>
        </Group>
        <Group $w={127}>
          <GroupBody $pad={3}>
            <BigButton><PageCheck s={32} /><span>属性</span><Caret /></BigButton>
            <Stack $tall $pad={4}>
              <SmallButton><OpenIcon /><span>打开</span><Caret /></SmallButton>
              <SmallButton $dim><EditIcon /><span>编辑</span></SmallButton>
              <SmallButton><History /><span>历史记录</span></SmallButton>
            </Stack>
          </GroupBody>
          <GroupName>打开</GroupName>
        </Group>
        <Group $w={85}>
          <GroupBody $pad={7}>
            <Stack>
              <SmallButton><Tiles on={[true, true, true, true]} /><span>全部选择</span></SmallButton>
              <SmallButton><Tiles on={[false, false, false, false]} /><span>全部取消</span></SmallButton>
              <SmallButton><Tiles on={[false, true, true, false]} /><span>反向选择</span></SmallButton>
            </Stack>
          </GroupBody>
          <GroupName>选择</GroupName>
        </Group>
      </Ribbon>

      <AddressRow>
        <NavButtons>
          <button aria-label="后退"><ArrowIcon color="#666" d="M12 6H1M6 1L1 6l5 5" /></button>
          <button aria-label="前进"><ArrowIcon color="#d4d4d4" d="M0 6h11M6 1l5 5-5 5" /></button>
          <button aria-label="最近位置"><Chevron dir="down" color="#888" s={6} /></button>
          <button aria-label="上一级"><ArrowIcon color="#666" d="M6 12V1M1 6l5-5 5 5" /></button>
        </NavButtons>
        <AddressBox>
          <Folder />
          <Crumbs>
            {crumbs.map((c) => (
              <Crumb key={c}><Chevron dir="right" /><a href="#crumb">{c}</a></Crumb>
            ))}
          </Crumbs>
          <BoxButton aria-label="历史地址"><Chevron dir="down" color="#666" s={9} w={1.6} /></BoxButton>
          <BoxButton $line aria-label="刷新"><Refresh /></BoxButton>
        </AddressBox>
        <SearchBox>
          <input aria-label="搜索" placeholder={'搜索"2个...'} />
          <Magnifier color="#555" />
        </SearchBox>
      </AddressRow>

      <Body>
        <Sidebar>
          {tree.map((group, g) => (
            <ul key={g}>
              {group.map((n, i) => (
                <TreeItem key={n.label} $level={i === 0 ? 0 : 1} $on={n.on}>
                  {n.icon}
                  <a href="#folder">{n.label}</a>
                  {n.pin && <SmallPin />}
                </TreeItem>
              ))}
            </ul>
          ))}
        </Sidebar>
        <Files>
          <FileTable>
            <colgroup>
              <col width="258" /><col width="144" /><col width="120" /><col width="80" />
            </colgroup>
            <thead>
              <tr>
                <th>名称<SortMark><Chevron dir="up" s={8} w={1} /></SortMark></th>
                <th>修改日期</th>
                <th>类型</th>
                <th>大小</th>
              </tr>
            </thead>
            <tbody>
              {files.map((f) => (
                <FileRow key={f.name} $on={f.on}>
                  <td><FileName><FilePage />{f.name}</FileName></td>
                  <td>{f.date}</td>
                  <td>{f.type}</td>
                  <td>{f.size}</td>
                </FileRow>
              ))}
            </tbody>
          </FileTable>
        </Files>
      </Body>

      <StatusBar>
        <span>2 个项目</span>
        <Pair><span>选中 1 个项目</span><span>107 KB</span></Pair>
        <ViewButtons>
          <ViewButton $on aria-label="详细信息"><DetailsView /></ViewButton>
          <ViewButton aria-label="大图标"><PictureIcon /></ViewButton>
        </ViewButtons>
      </StatusBar>

      <Taskbar>
        <SysButtons>
          <SysButton aria-label="开始"><WinLogo /></SysButton>
          <SysButton aria-label="搜索"><Magnifier color="#f2f6f6" w={1} s={16} /></SysButton>
          <SysButton aria-label="任务视图"><TaskView /></SysButton>
        </SysButtons>
        <Apps>
          {apps.map((a) => <AppButton key={a.name} aria-label={a.name} $on={a.on}>{a.icon}</AppButton>)}
        </Apps>
        <Tray>
          <TrayButton $w={32}>链接</TrayButton>
          <TrayButton aria-label="显示隐藏的图标"><Chevron dir="up" color="#fff" s={12} w={1} /></TrayButton>
          {tray.map((t) => <TrayButton key={t.name} aria-label={t.name}>{t.icon}</TrayButton>)}
          <TrayButton>中</TrayButton>
          <TrayButton $w={32} aria-label="搜狗输入法"><Sogou /></TrayButton>
          <Clock>14:38<br />2022/3/31</Clock>
          <TrayButton $w={34} aria-label="通知"><Notice /></TrayButton>
          <TrayButton $w={12} aria-hidden="true" tabIndex={-1} />
          <ShowDesktop aria-label="显示桌面" />
        </Tray>
      </Taskbar>

      <Dialog role="dialog" aria-labelledby="open-with">
        <DialogTitle id="open-with">你要以何方式打开此 .tcl 文件?</DialogTitle>
        <AppOption><AppTile><Notepad /></AppTile>记事本</AppOption>
        <AppOption><AppTile><Store /></AppTile>在 Microsoft Store 中查找应用</AppOption>
        <MoreLink href="#more">
          更多应用
          <svg width="12" height="13" viewBox="0 0 12 13"><path d="M6 0v12M1 7l5 5 5-5" fill="none" stroke="#2a86cb" /></svg>
        </MoreLink>
        <OkButton disabled>确定</OkButton>
      </Dialog>

      <PenWidget>
        <svg width="48" height="28" viewBox="0 0 48 28">
          <path d="M0 0h14v14H0z" fill="#7c7c7c" />
          <path d="M4 4l6 6M10 4l-6 6" stroke="#23d52a" strokeWidth="1.500" />
          <path d="M20 1h5l3 2-5 5-2-3z" fill="#2be332" />
          <path d="M28 3l18 17c1 3-1 7-5 6L23 8M26 6l18 17M40 25c0-3 2-5 5-5M24 10l15 15" fill="none" stroke="#2be332" strokeDasharray="2 .5" />
        </svg>
      </PenWidget>
      <Cursor>
        <svg width="13" height="20" viewBox="0 0 13 20">
          <path d="M.5.800v16l3.700-3.500 2.700 5.500 2.400-1.200L6.700 12.300h5z" fill="#fff" stroke="#222" />
        </svg>
      </Cursor>
    </Page>
  );
}
